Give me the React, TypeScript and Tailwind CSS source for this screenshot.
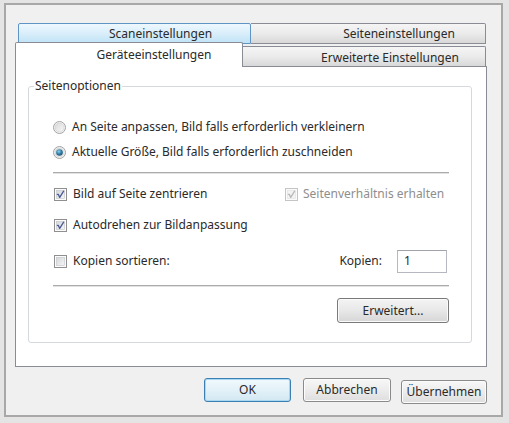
import React from "react";

const ui = "font-['Noto_Sans',sans-serif] text-[12px] leading-[16px] text-[#2a2a2a]";

function Radio({ checked }: { checked?: boolean }) {
  return (
    <svg width="13" height="13" viewBox="0 0 13 13" className="shrink-0">
      <defs>
        <linearGradient id="radio-face" x1="0" y1="0" x2="1" y2="1">
          <stop offset="0" stopColor="#d9d9d9" />
          <stop offset="1" stopColor="#f7f7f7" />
        </linearGradient>
        <radialGradient id="radio-dot" cx="0.4" cy="0.35" r="0.7">
          <stop offset="0" stopColor="#8fd3ef" />
          <stop offset="0.55" stopColor="#2f7ea8" />
          <stop offset="1" stopColor="#1d4f6e" />
        </radialGradient>
      </defs>
      <circle cx="6.5" cy="6.5" r="6" fill="#f4f4f4" stroke="#a3a3a3" />
      <circle cx="6.5" cy="6.5" r="4.5" fill="url(#radio-face)" stroke="#cfcfcf" strokeWidth="0.6" />
      {checked && <circle cx="6.5" cy="6.5" r="3.3" fill="url(#radio-dot)" />}
    </svg>
  );
}

function Check({ checked, disabled }: { checked?: boolean; disabled?: boolean }) {
  return (
    <svg width="13" height="13" viewBox="0 0 13 13" className="shrink-0">
      <defs>
        <linearGradient id="check-face" x1="0" y1="0" x2="1" y2="1">
          <stop offset="0" stopColor="#d4d6da" />
          <stop offset="1" stopColor="#f6f6f6" />
        </linearGradient>
      </defs>
      <rect x="0.5" y="0.5" width="12" height="12" fill="#fbfbfb" stroke={disabled ? "#c4c4c4" : "#8f8f8f"} />
      <rect
        x="2.5"
        y="2.5"
        width="8"
        height="8"
        fill={disabled ? "#f3f3f3" : "url(#check-face)"}
        stroke={disabled ? "#e0e0e0" : "#c2c4c8"}
        strokeWidth="0.6"
      />
      {checked && (
        <path
          d="M3.4 6.4 L4.4 6.4 L5.7 9.4 L9.6 3.2"
          fill="none"
          stroke={disabled ? "#b8b8b8" : "#4b5a94"}
          strokeWidth="1.3"
          strokeLinecap="round"
          strokeLinejoin="round"
        />
      )}
    </svg>
  );
}

function Separator() {
  return <div className="h-0 border-t border-b border-t-[#ababab] border-b-[#e2e2e2]" />;
}

function PushButton({ label, w, primary }: { label: string; w: string; primary?: boolean }) {
  return (
    <button
      className={
        primary
          ? `${w} h-[24px] rounded-[3px] border border-[#3c7fb1] bg-gradient-to-b from-[#f1f9fd] via-[#e3f1f8] to-[#d3e8f2] shadow-[inset_0_0_0_1px_#a7d9f2] ${ui}`
          : `${w} h-[24px] rounded-[3px] border border-[#8a8a8a] bg-gradient-to-b from-[#f7f7f7] via-[#ececec] to-[#dedede] shadow-[inset_0_0_0_1px_#fcfcfc] ${ui}`
      }
    >
      {label}
    </button>
  );
}

export default function App() {
  return (
    <div className="w-[509px] h-[423px] bg-[#e4e4e4] pt-[3px] pl-[4px] pr-[6px] pb-[6px]">
      <div className="h-full flex flex-col border-2 border-[#a8a8a8] bg-[#f0f0f0] pl-[9px] pr-[14px] pt-[18px]">
        {/* back row of tabs */}
        <div className="flex ml-[3px] h-[21px]">
          <div
            className={`w-[233px] h-full border border-[#5f95c4] rounded-t-[2px] bg-gradient-to-b from-[#eef8fe] via-[#d9eefa] to-[#bfe3f6] flex items-center justify-center pl-[52px] ${ui}`}
          >
            Scaneinstellungen
          </div>
          <div
            className={`w-[235px] h-full border border-l-0 border-[#898c95] rounded-tr-[2px] bg-gradient-to-b from-[#f5f5f5] via-[#ebebeb] to-[#d8d8d8] flex items-center justify-center pl-[62px] ${ui}`}
          >
            Seiteneinstellungen
          </div>
        </div>
        {/* front row of tabs */}
        <div className="flex items-end h-[24px] -mt-[2px]">
          <div
            className={`relative z-10 w-[228px] h-[25px] -mb-px border border-b-0 border-[#898c95] rounded-t-[2px] bg-white flex items-center justify-center pl-[50px] ${ui}`}
          >
            Geräteeinstellungen
          </div>
          <div
            className={`w-[243px] h-[20px] border border-b-0 border-l-0 border-[#898c95] rounded-tr-[2px] bg-gradient-to-b from-[#f5f5f5] via-[#ebebeb] to-[#d8d8d8] flex items-center justify-center pl-[52px] pt-[3px] ${ui}`}
          >
            Erweiterte Einstellungen
          </div>
        </div>
        {/* tab page */}
        <div className="h-[301px] border border-[#898c95] bg-white pt-[11px] pl-[12px] pr-[14px]">
          <fieldset className="border border-[#d5d9dd] rounded-[3px]">
            <legend className={`ml-[5px] px-[1px] leading-[15px] ${ui}`}>Seitenoptionen</legend>
            <div className="pl-[24px] pr-[22px] pb-[19px]">
              <div className={`mt-[25px] h-[16px] flex items-center gap-[6px] ${ui}`}>
                <Radio />
                <span>An Seite anpassen, Bild falls erforderlich verkleinern</span>
              </div>
              <div className={`mt-[9px] h-[16px] flex items-center gap-[6px] ${ui}`}>
                <Radio checked />
                <span>Aktuelle Größe, Bild falls erforderlich zuschneiden</span>
              </div>
              <div className="mt-[12px]">
                <Separator />
              </div>
              <div className={`mt-[12px] h-[16px] flex items-center ${ui}`}>
                <div className="w-[232px] flex items-center gap-[6px] pl-[1px]">
                  <Check checked />
                  <span>Bild auf Seite zentrieren</span>
                </div>
                <div className="flex items-center gap-[5px] text-[#8e8e8e]">
                  <Check checked disabled />
                  <span>Seitenverhältnis erhalten</span>
                </div>
              </div>
              <div className={`mt-[15px] h-[16px] flex items-center gap-[6px] pl-[1px] ${ui}`}>
                <Check checked />
                <span>Autodrehen zur Bildanpassung</span>
              </div>
              <div className={`mt-[16px] h-[24px] flex items-center justify-between ${ui}`}>
                <div className="flex items-center gap-[6px] pl-[1px]">
                  <Check />
                  <span>Kopien sortieren:</span>
                </div>
                <div className="flex items-center gap-[15px] pr-[2px]">
                  <span>Kopien:</span>
                  <div className="w-[50px] h-[23px] border border-[#b5b8be] border-t-[#a0a3a9] bg-white flex items-center pl-[6px]">
                    1
                  </div>
                </div>
              </div>
              <div className="mt-[12px]">
                <Separator />
              </div>
              <div className="mt-[11px] flex justify-end">
                <button
                  className={`w-[112px] h-[25px] rounded-[3px] border border-[#7a7a7a] bg-gradient-to-b from-[#f4f4f4] via-[#e8e8e8] to-[#d6d6d6] shadow-[inset_0_0_0_1px_#fafafa] ${ui}`}
                >
                  Erweitert...
                </button>
              </div>
            </div>
          </fieldset>
        </div>
        {/* dialog buttons */}
        <div className="mt-[11px] flex justify-end">
          <div className="flex gap-[12px] mr-[-1px]">
            <PushButton label="OK" w="w-[87px]" primary />
            <PushButton label="Abbrechen" w="w-[88px]" />
          </div>
          <div className="ml-[11px]">
            <PushButton label="Übernehmen" w="w-[86px]" />
          </div>
        </div>
      </div>
    </div>
  );
}
